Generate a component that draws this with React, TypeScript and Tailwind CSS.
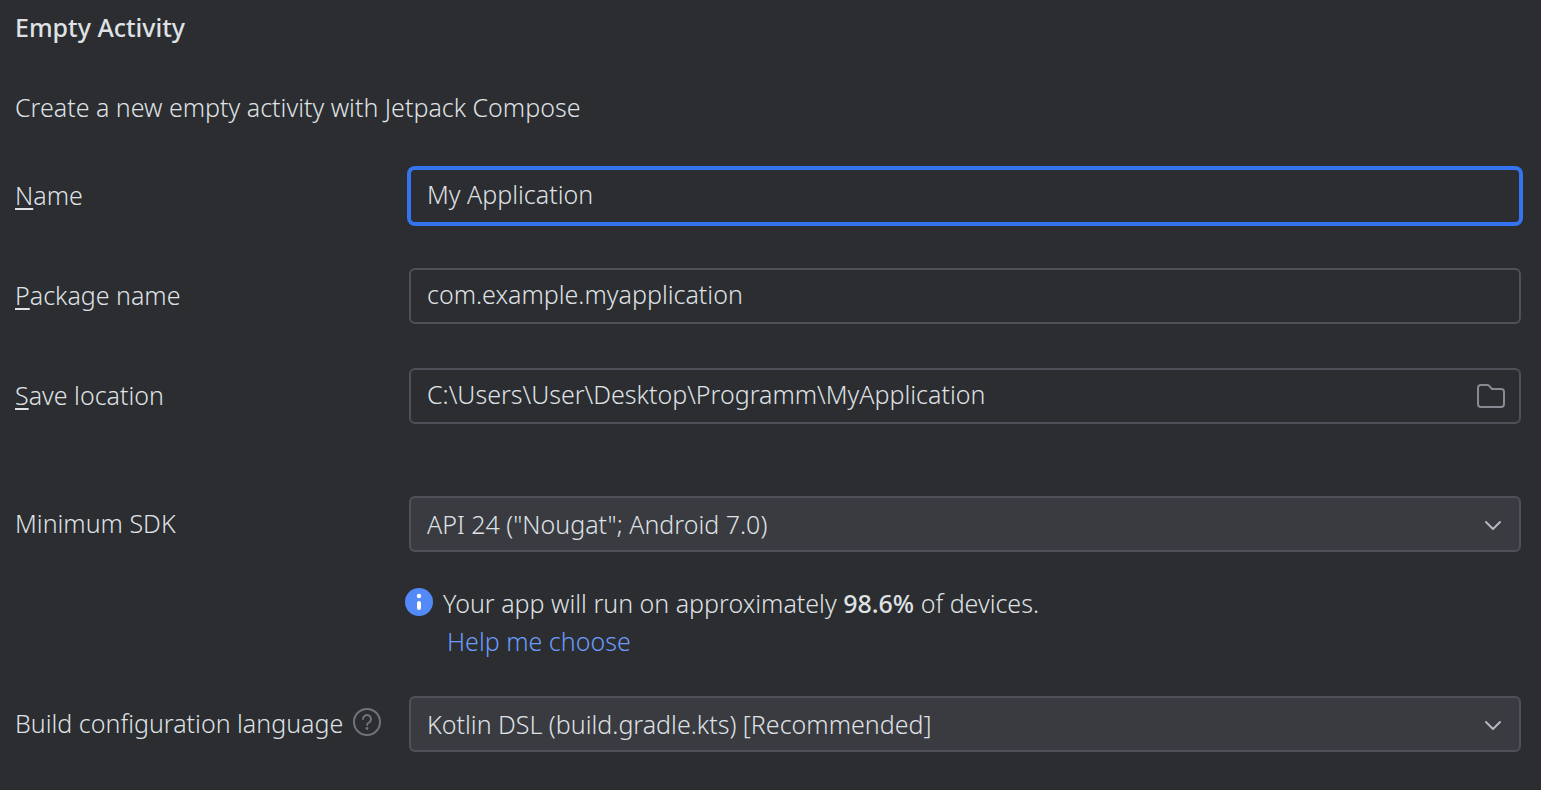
import React, { useState } from "react";

const fieldBase = "h-14 w-full min-w-0 rounded-md border-2 px-4 text-[#dfe1e5] outline-none";
const inputBase = `${fieldBase} bg-[#2b2d30] pb-1`;

function Label({ htmlFor, text, mnemonic }: { htmlFor: string; text: string; mnemonic?: boolean }) {
  return (
    <label htmlFor={htmlFor} className="pb-0.5">
      {mnemonic ? (
        <>
          <span className="underline decoration-2 underline-offset-3">{text[0]}</span>
          {text.slice(1)}
        </>
      ) : (
        text
      )}
    </label>
  );
}

function Row({ label, children, className = "" }: { label: React.ReactNode; children: React.ReactNode; className?: string }) {
  return (
    <div className={`grid grid-cols-[394px_1fr] items-center ${className}`}>
      <div className="flex items-center gap-2.5">{label}</div>
      {children}
    </div>
  );
}

function Dropdown({ id, options }: { id: string; options: string[] }) {
  return (
    <div className="relative">
      <select id={id} className={`${fieldBase} appearance-none border-[#4e5157] bg-[#393b40]`}>
        {options.map((o) => (
          <option key={o}>{o}</option>
        ))}
      </select>
      <svg className="pointer-events-none absolute top-4.5 right-4 size-6" viewBox="0 0 24 24" fill="none" stroke="#b4b8bf" strokeWidth="2" strokeLinecap="round" strokeLinejoin="round" aria-hidden="true">
        <path d="M5 8l7 7 7-7" />
      </svg>
    </div>
  );
}

export default function App() {
  const [name, setName] = useState("My Application");
  const [pkg, setPkg] = useState("com.example.myapplication");
  const [path, setPath] = useState("C:\\Users\\User\\Desktop\\Programm\\MyApplication");
  return (
    <main className="min-h-screen bg-[#2b2d30] pt-2 pr-5 pb-9 pl-[15px] font-['Noto_Sans',sans-serif] text-[25px] leading-[38px] font-light text-[#dfe1e5]">
      <h1 className="font-medium">Empty Activity</h1>
      <p className="mt-[42px]">Create a new empty activity with Jetpack Compose</p>
      <form className="mt-[42px]" onSubmit={(e) => e.preventDefault()}>
        <Row label={<Label htmlFor="name" text="Name" mnemonic />}>
          <input id="name" value={name} onChange={(e) => setName(e.target.value)} className={`${inputBase} border-[#3574f0] ring-2 ring-[#3574f0]`} />
        </Row>
        <Row className="mt-11" label={<Label htmlFor="package" text="Package name" mnemonic />}>
          <input id="package" value={pkg} onChange={(e) => setPkg(e.target.value)} className={`${inputBase} border-[#4e5157]`} />
        </Row>
        <Row className="mt-11" label={<Label htmlFor="location" text="Save location" mnemonic />}>
          <div className="relative">
            <input id="location" value={path} onChange={(e) => setPath(e.target.value)} className={`${inputBase} border-[#4e5157] pr-16`} />
            <button type="button" aria-label="Browse" className="absolute top-3 right-3.5 size-8">
              <svg viewBox="0 0 32 32" fill="none" stroke="#868a91" strokeWidth="2" strokeLinejoin="round" aria-hidden="true">
                <path d="M3 8a3 3 0 0 1 3-3h6.500a2 2 0 0 1 1.400.6L17 9h9a3 3 0 0 1 3 3v12a3 3 0 0 1-3 3H6a3 3 0 0 1-3-3z" />
              </svg>
            </button>
          </div>
        </Row>
        <Row className="mt-[72px]" label={<Label htmlFor="sdk" text="Minimum SDK" />}>
          <Dropdown id="sdk" options={['API 24 ("Nougat"; Android 7.0)']} />
        </Row>
        <div className="mt-8 ml-[390px] flex gap-2.5">
          <svg className="mt-1 size-7 shrink-0" viewBox="0 0 28 28" aria-hidden="true">
            <circle cx="14" cy="14" r="14" fill="#548af7" />
            <circle cx="14" cy="8" r="2.2" fill="white" />
            <rect x="12" y="13" width="4" height="9" rx="2" fill="white" />
          </svg>
          <div>
            <p>
              Your app will run on approximately <b className="font-medium">98.6%</b> of devices.
            </p>
            <a href="#help" className="ml-1 text-[#6b9bfa]">Help me choose</a>
          </div>
        </div>
        <Row
          className="mt-9"
          label={
            <>
              <Label htmlFor="language" text="Build configuration language" />
              <button type="button" aria-label="About the build configuration language" className="mb-1 size-7">
                <svg viewBox="0 0 28 28" fill="none" stroke="#6f737a" strokeWidth="2" strokeLinecap="round" aria-hidden="true">
                  <circle cx="14" cy="14" r="13" />
                  <path d="M10 11a4 4 0 1 1 6 3.500c-1.500.9-2 1.300-2 2.500" />
                  <circle cx="14" cy="20.500" r="1.400" fill="#6f737a" stroke="none" />
                </svg>
              </button>
            </>
          }
        >
          <Dropdown id="language" options={["Kotlin DSL (build.gradle.kts) [Recommended]"]} />
        </Row>
      </form>
    </main>
  );
}
